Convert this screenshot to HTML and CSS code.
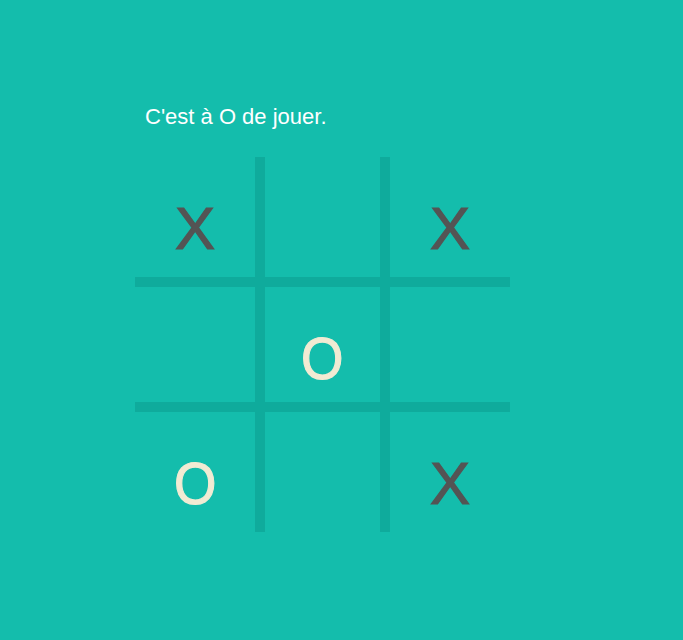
FILE: index.html
```html
<!DOCTYPE html>
<html lang="fr">
<head>
<meta charset="utf-8">
<title>Morpion</title>
<link rel="stylesheet" href="styles.css">
</head>
<body>
<main class="game">
  <p class="status">C'est à O de jouer.</p>
  <div class="board">
    <div class="cell c1 r1 x">X</div>
    <div class="cell c2 r1"></div>
    <div class="cell c3 r1 x">X</div>
    <div class="cell c1 r2"></div>
    <div class="cell c2 r2 o"><span class="mark">O</span></div>
    <div class="cell c3 r2"></div>
    <div class="cell c1 r3 o"><span class="mark">O</span></div>
    <div class="cell c2 r3"></div>
    <div class="cell c3 r3 x">X</div>
  </div>
</main>
</body>
</html>
```
FILE: styles.css
```css
html, body {
  margin: 0;
  padding: 0;
  background: #14bdac;
  height: 100%;
}
body {
  font-family: "Liberation Sans", Arial, sans-serif;
}
.game {
  padding: 104px 0 0 135px;
}
.status {
  margin: 0 0 0 10px;
  color: #ffffff;
  font-size: 22px;
  line-height: 25px;
  height: 25px;
}
.board {
  margin-top: 28px;
  display: grid;
  grid-template-columns: 130px 125px 120px;
  grid-template-rows: 130px 125px 120px;
  width: 375px;
}
.cell {
  box-sizing: border-box;
  text-align: center;
  font-size: 60px;
  line-height: 60px;
  padding-top: 42px;
}
.c1, .c2 { border-right: 10px solid #0fab9c; }
.r1, .r2 { border-bottom: 10px solid #0fab9c; }
.x { color: #545454; -webkit-text-stroke: 1.2px #545454; }
.o { color: #f2ebd3; -webkit-text-stroke: 1.2px #f2ebd3; }
.mark {
  display: inline-block;
  transform: scaleX(0.91);
}
```
